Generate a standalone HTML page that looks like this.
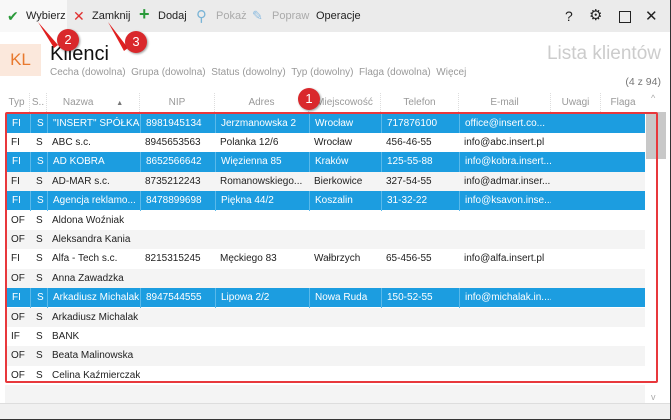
<!DOCTYPE html>
<html><head><meta charset="utf-8"><style>
*{margin:0;padding:0;box-sizing:border-box}
body{width:671px;height:420px;overflow:hidden;background:#fff;font-family:"Liberation Sans","DejaVu Sans",sans-serif;position:relative;font-size:11px;color:#222}
.abs{position:absolute;white-space:nowrap}
#tb{position:absolute;left:0;top:0;width:671px;height:32px;background:#ebebeb}
#tb .b{position:absolute;top:10px;font-size:11px;color:#222}
.hdr{position:absolute;top:93px;height:19px;font-size:10px;color:#999;text-align:center;line-height:19px;border-right:1px dotted #ddd}
.row{position:absolute;left:5px;width:640px;height:19.4px;font-size:10px;line-height:19.4px}
.row span{position:absolute;top:0;white-space:nowrap;overflow:hidden}
.sel{background:#1c9de0;color:#fff}
.sel span{border-left:1px solid #5ab9ea}
.alt{background:#f4f4f4}
.badge{position:absolute;width:22px;height:22px;border-radius:50%;background:#d9282c;color:#fff;font-size:13px;text-align:center;line-height:22px;box-shadow:1px 1px 2px rgba(0,0,0,.4)}
</style></head><body>
<div id="tb">
 <div style="position:absolute;left:0;top:0;width:67px;height:32px;background:#f8f8f8"></div>
 <span class="b" style="left:7px;color:#2a9a3a;font-weight:bold;top:8px;font-size:14px">✔</span>
 <span class="b" style="left:26px">Wybierz</span>
 <span class="b" style="left:73px;color:#e03030;font-size:14px;top:8px">✕</span>
 <span class="b" style="left:92px">Zamknij</span>
 <span class="b" style="left:139px;color:#2a9a3a;font-size:18px;top:4px;font-weight:bold">+</span>
 <span class="b" style="left:158px">Dodaj</span>
 <span class="b" style="left:196px;color:#7ab4d6;font-size:15px;top:7px">&#9906;</span>
 <span class="b" style="left:216px;color:#aaa">Pokaż</span>
 <span class="b" style="left:252px;color:#8bbbe0;top:8px;font-size:13px">&#9998;</span>
 <span class="b" style="left:272px;color:#aaa">Popraw</span>
 <span class="b" style="left:316px">Operacje</span>
 <span class="b" style="left:565px;font-size:14px;top:8px">?</span>
 <span class="b" style="left:589px;font-size:15px;top:6px">⚙</span>
 <span style="position:absolute;left:619px;top:11px;width:12px;height:12px;border:1.5px solid #222"></span>
 <span class="b" style="left:645px;font-size:15px;top:7px">✕</span>
</div>
<div class="abs" style="left:0;top:44px;width:41px;height:32px;background:#fbe8dc;color:#e8792e;font-size:17px;text-align:center;line-height:32px">KL</div>
<div class="abs" style="left:50px;top:43px;font-size:20px;color:#111">Klienci</div>
<div class="abs" style="left:50px;top:67px;font-size:10px;color:#999">Cecha (dowolna)&nbsp;&nbsp;Grupa (dowolna)&nbsp;&nbsp;Status (dowolny)&nbsp;&nbsp;Typ (dowolny)&nbsp;&nbsp;Flaga (dowolna)&nbsp;&nbsp;Więcej</div>
<div class="abs" style="right:10px;top:43px;font-size:19px;color:#ccc">Lista klientów</div>
<div class="abs" style="right:10px;top:76px;font-size:10.5px;color:#777">(4 z 94)</div>

<div class="hdr" style="left:4px;width:26px">Typ</div>
<div class="hdr" style="left:30px;width:17px">S..</div>
<div class="hdr" style="left:47px;width:93px">Nazwa <span style="font-size:7px;color:#777;margin-left:20px">▲</span></div>
<div class="hdr" style="left:140px;width:75px">NIP</div>
<div class="hdr" style="left:215px;width:94px">Adres</div>
<div class="hdr" style="left:309px;width:72px">Miejscowość</div>
<div class="hdr" style="left:381px;width:78px">Telefon</div>
<div class="hdr" style="left:459px;width:92px">E-mail</div>
<div class="hdr" style="left:551px;width:50px">Uwagi</div>
<div class="hdr" style="left:601px;width:44px;border:none">Flaga</div>
<div class="abs" style="left:651px;top:93px;color:#aaa;font-size:9px">^</div>
<div class="abs" style="left:646px;top:112px;width:20px;height:47px;background:#c8c8c8"></div>
<div class="abs" style="left:651px;top:392px;color:#aaa;font-size:9px">v</div>

<div id="rows"></div>
<script>
var d=[
["s","FI","S","\"INSERT\" SPÓŁKA...","8981945134","Jerzmanowska 2","Wrocław","717876100","office@insert.co..."],
["w","FI","S","ABC s.c.","8945653563","Polanka  12/6","Wrocław","456-46-55","info@abc.insert.pl"],
["s","FI","S","AD KOBRA","8652566642","Więzienna 85","Kraków","125-55-88","info@kobra.insert...."],
["a","FI","S","AD-MAR s.c.","8735212243","Romanowskiego...","Bierkowice","327-54-55","info@admar.inser...."],
["s","FI","S","Agencja reklamo...","8478899698","Piękna  44/2","Koszalin","31-32-22","info@ksavon.inse...."],
["w","OF","S","Aldona Woźniak","","","","",""],
["a","OF","S","Aleksandra Kania","","","","",""],
["w","FI","S","Alfa - Tech s.c.","8215315245","Męckiego  83","Wałbrzych","65-456-55","info@alfa.insert.pl"],
["a","OF","S","Anna Zawadzka","","","","",""],
["s","FI","S","Arkadiusz Michalak","8947544555","Lipowa  2/2","Nowa Ruda","150-52-55","info@michalak.in...."],
["a","OF","S","Arkadiusz Michalak","","","","",""],
["w","IF","S","BANK","","","","",""],
["a","OF","S","Beata Malinowska","","","","",""],
["w","OF","S","Celina Kaźmierczak","","","","",""],
["a","","","","","","","",""]];
var xs=[0,25,42,135,210,304,376,454,546],ws=[25,17,93,75,94,72,78,92,50];
var h="";
d.forEach(function(r,i){var c=r[0]=="s"?"sel":(r[0]=="a"?"alt":"");
h+='<div class="row '+c+'" style="top:'+(113.5+i*19.4)+'px">';
for(var j=1;j<9;j++){h+='<span style="left:'+xs[j-1]+'px;width:'+ws[j-1]+'px;padding-left:'+(j<3?6:5)+'px">'+r[j]+'</span>';}
h+='</div>';});
document.getElementById("rows").innerHTML=h;
</script>
<div class="abs" style="left:5px;top:112px;width:653px;height:271px;border:2px solid #e8383c;border-radius:2px"></div>
<div class="abs" style="left:0;top:403px;width:671px;height:17px;background:#f0f0f0;border-top:1px solid #ddd"></div>
<div class="abs" style="left:670px;top:0;width:1px;height:420px;background:#333"></div>
<div class="abs" style="left:0;top:419px;width:671px;height:1px;background:#333"></div>

<svg class="abs" style="left:0;top:0" width="671" height="420">
 <path d="M38 22 L58 45 L54 48 Z" fill="#e02020"/>
 <path d="M108 22 L128 48 L124 51 Z" fill="#e02020"/>
</svg>
<div class="badge" style="left:298px;top:88px">1</div>
<div class="badge" style="left:57px;top:29px">2</div>
<div class="badge" style="left:125px;top:31px">3</div>
</body></html>
